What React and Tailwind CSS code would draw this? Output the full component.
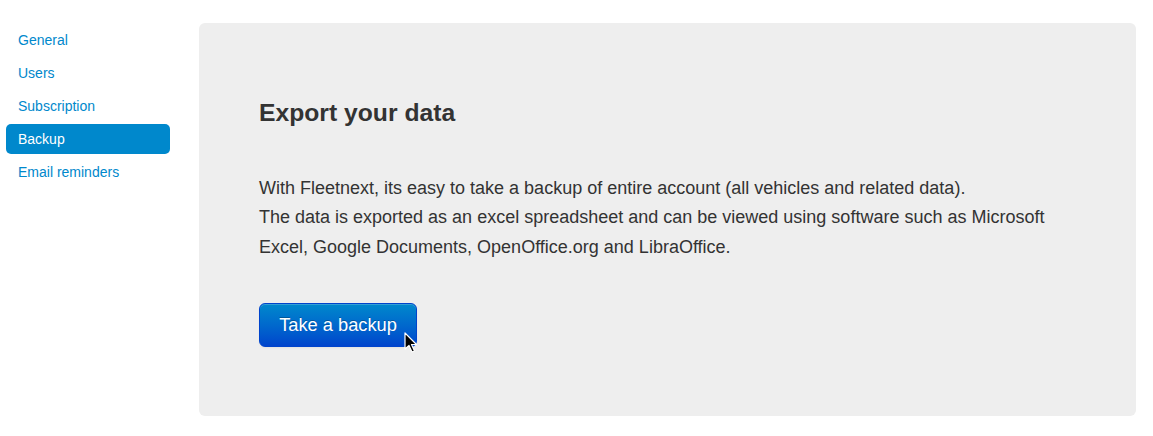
import React from 'react';

const navItems = ['General', 'Users', 'Subscription', 'Backup', 'Email reminders'];

const Cursor = () => (
  <svg width="14" height="22" viewBox="0 0 14 22" className="absolute left-[145px] top-[29px]">
    <path d="M1 1 L1 17 L5 13.5 L8 20 L10.5 19 L7.5 12.5 L12.5 12.5 Z" fill="#000" stroke="#fff" strokeWidth="1.2" strokeLinejoin="round" />
  </svg>
);

const App = () => (
  <div className="flex pl-[6px] pt-[23px] bg-white min-h-[436px]" style={{ fontFamily: '"Liberation Sans", Arial, sans-serif' }}>
    <ul className="w-[164px] mt-[2px] flex flex-col gap-[3px] text-[14px] leading-[14px]">
      {navItems.map(item => (
        <li key={item}>
          <a
            href="#"
            className={
              item === 'Backup'
                ? 'block px-[12px] py-[8px] rounded-[5px] bg-[#0088cc] text-white'
                : 'block px-[12px] py-[8px] rounded-[5px] text-[#0088cc]'
            }
          >
            {item}
          </a>
        </li>
      ))}
    </ul>
    <div className="ml-[29px] w-[937px] h-[393px] bg-[#eeeeee] rounded-[6px] p-[60px] text-[#333333]">
      <h3 className="text-[24.7px] leading-[40px] font-bold mt-[10px]">Export your data</h3>
      <p className="mt-[41px] text-[18px] leading-[29.3px]">
        With Fleetnext, its easy to take a backup of entire account (all vehicles and related data).
        <br />
        The data is exported as an excel spreadsheet and can be viewed using software such as Microsoft Excel, Google Documents, OpenOffice.org and LibraOffice.
      </p>
      <div className="relative mt-[41px] inline-block">
        <button className="h-[44px] w-[158px] text-[18.25px] text-white rounded-[6px] border border-[#0044cc] bg-gradient-to-b from-[#0088cc] to-[#0044cc] [text-shadow:0_-1px_0_rgba(0,0,0,0.25)] shadow-[inset_0_1px_0_rgba(255,255,255,0.2),0_1px_2px_rgba(0,0,0,0.05)]">
          Take a backup
        </button>
        <Cursor />
      </div>
    </div>
  </div>
);

export default App;
